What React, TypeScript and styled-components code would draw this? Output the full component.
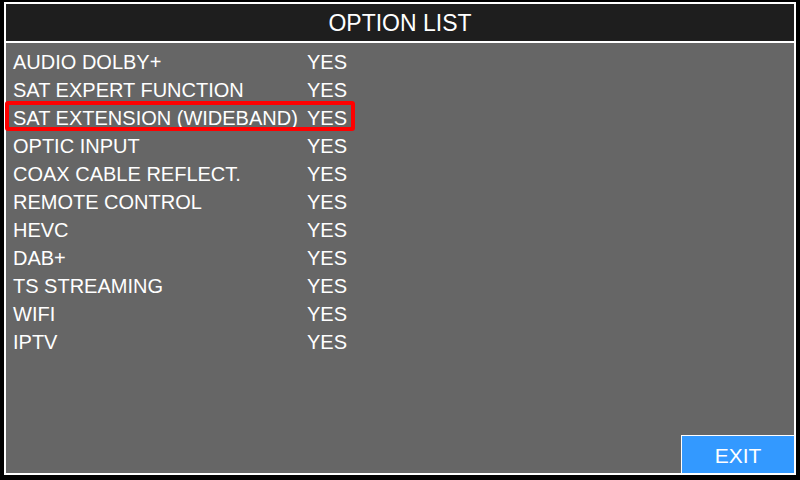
import React from "react";
import styled, { createGlobalStyle } from "styled-components";

const Global = createGlobalStyle`
  html, body { margin: 0; padding: 0; background: #000; }
  body { font-family: "Liberation Sans", Arial, sans-serif; width: 800px; height: 480px; overflow: hidden; }
`;

const Screen = styled.div`
  width: 800px;
  height: 480px;
  background: #000;
  padding: 2px 4px 0 4px;
  box-sizing: border-box;
`;

const Frame = styled.div`
  width: 792px;
  height: 473px;
  box-sizing: border-box;
  border: 2px solid #fff;
  display: flex;
  flex-direction: column;
  background: #666666;
`;

const Header = styled.div`
  height: 36px;
  flex: none;
  background: #1e1e1e;
  border-bottom: 2px solid #fff;
  color: #fff;
  font-size: 23px;
  display: flex;
  align-items: center;
  justify-content: center;
  padding-top: 1px;
  box-sizing: content-box;
`;

const Body = styled.div`
  flex: 1;
  display: flex;
  flex-direction: column;
  padding: 5px 0 0 7px;
`;

const List = styled.div`
  flex: 1;
  display: flex;
  flex-direction: column;
`;

const Row = styled.div<{ $selected?: boolean }>`
  position: relative;
  height: 28px;
  display: flex;
  align-items: center;
  color: #fff;
  font-size: 20px;
  ${(p) =>
    p.$selected &&
    `
    &::after {
      content: "";
      position: absolute;
      left: -8px;
      top: -3px;
      width: 350px;
      height: 30px;
      box-sizing: border-box;
      border: 4px solid #ff0000;
      border-radius: 3px;
    }
  `}
`;

const Label = styled.span`
  width: 294px;
  white-space: nowrap;
`;

const Value = styled.span``;

const Footer = styled.div`
  display: flex;
  justify-content: flex-end;
`;

const ExitButton = styled.div`
  width: 113px;
  height: 38px;
  box-sizing: border-box;
  background: #3399ff;
  border-top: 1px solid #fff;
  border-left: 1px solid #fff;
  color: #fff;
  font-size: 21px;
  display: flex;
  align-items: center;
  justify-content: center;
  padding-top: 2px;
`;

const options = [
  "AUDIO DOLBY+",
  "SAT EXPERT FUNCTION",
  "SAT EXTENSION (WIDEBAND)",
  "OPTIC INPUT",
  "COAX CABLE REFLECT.",
  "REMOTE CONTROL",
  "HEVC",
  "DAB+",
  "TS STREAMING",
  "WIFI",
  "IPTV",
];

export default function App() {
  return (
    <Screen>
      <Global />
      <Frame>
        <Header>OPTION LIST</Header>
        <Body>
          <List>
            {options.map((o, i) => (
              <Row key={o} $selected={i === 2}>
                <Label>{o}</Label>
                <Value>YES</Value>
              </Row>
            ))}
          </List>
          <Footer>
            <ExitButton>EXIT</ExitButton>
          </Footer>
        </Body>
      </Frame>
    </Screen>
  );
}
